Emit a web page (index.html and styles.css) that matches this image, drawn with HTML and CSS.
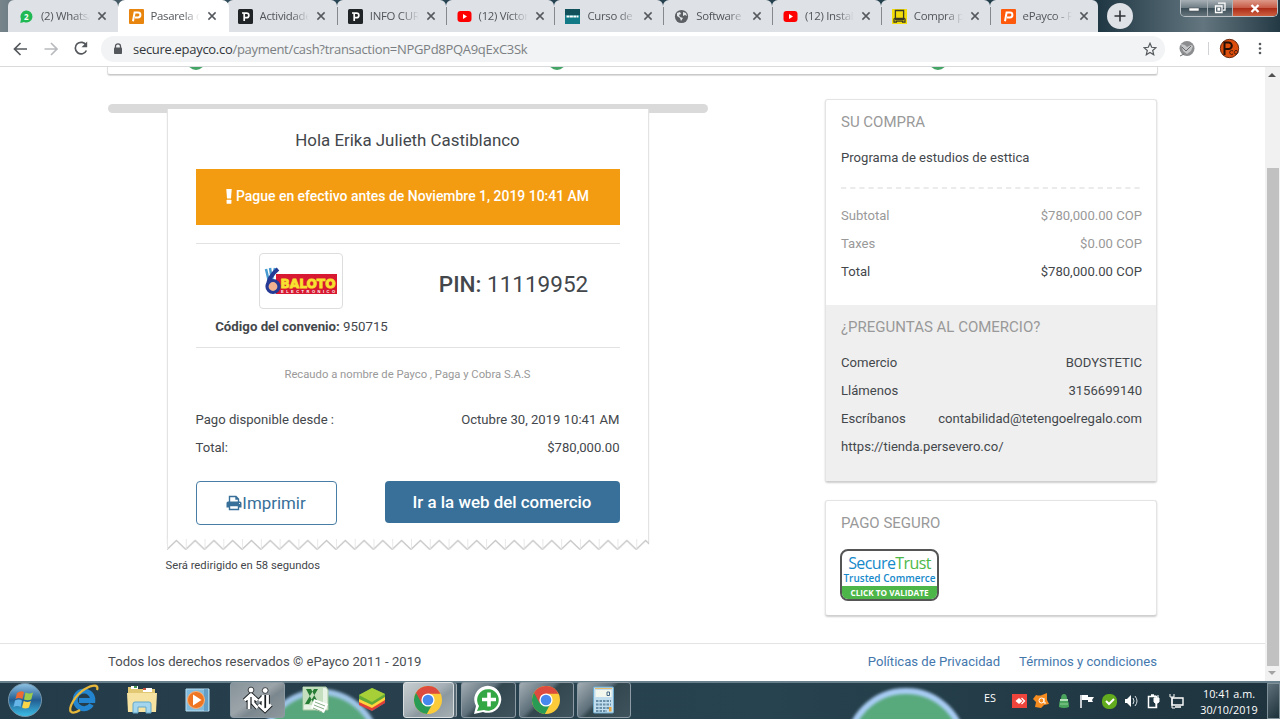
FILE: index.html
```html
<!DOCTYPE html>
<html lang="es">
<head>
<meta charset="utf-8">
<title>Pasarela de pagos</title>
<link rel="stylesheet" href="styles.css">
</head>
<body>
<svg width="0" height="0" class="defs">
  <defs>
    <symbol id="close" viewBox="0 0 10 10"><path d="M1.4 1.4 8.6 8.6M8.6 1.4 1.4 8.6" stroke="#55595d" stroke-width="1.5"/></symbol>
    <symbol id="youtube" viewBox="0 0 15 15"><rect x=".5" y="2" width="14" height="11" rx="3" fill="#f00"/><path d="M6 5v5l4-2.5z" fill="#fff"/></symbol>
    <symbol id="payco" viewBox="0 0 15 15"><rect width="15" height="15" rx="1" fill="currentColor"/><path d="M4 12.3 5.6 3.6H9a2.2 2.2 0 0 1 0 4.8H6" fill="none" stroke="#fff" stroke-width="2"/></symbol>
    <symbol id="dark-p" viewBox="0 0 15 15"><rect width="15" height="15" rx="1.5" fill="#202427"/><path d="M4 4h2.2v8M6.2 4.2H8.6a2.2 2.2 0 0 1 0 4.5H6" fill="none" stroke="#fff" stroke-width="1.7"/></symbol>
    <symbol id="chrome" viewBox="0 0 30 30">
      <circle cx="15" cy="15" r="14" fill="#fccb3a"/>
      <path d="M15 15 3 7.8A14 14 0 0 0 13.8 29L20 18z" fill="#2a9b55"/>
      <path d="M15 15 8.5 18 3 7.8A14 14 0 0 1 27.5 8.8H15z" fill="#dc4b3e"/>
      <circle cx="15" cy="15" r="6.6" fill="#fff"/><circle cx="15" cy="15" r="5.3" fill="#4688ee"/>
    </symbol>
    <linearGradient id="blue" x2="0" y2="1"><stop stop-color="#8fc3e4"/><stop offset=".5" stop-color="#235d91"/><stop offset="1" stop-color="#3cc0e8"/></linearGradient>
    <filter id="soft" color-interpolation-filters="sRGB" x="-10%" y="-10%" width="120%" height="120%"><feGaussianBlur stdDeviation="1.8"/></filter>
    <pattern id="teeth" width="18.77" height="12" patternUnits="userSpaceOnUse"><path d="M0 10.5 9.4 1.5 18.77 10.5" fill="none" stroke="#c9c9c9" stroke-width="1.4"/><path d="M.5 0v10" stroke="#e8e8e8"/></pattern>
  </defs>
</svg>
<div class="screen">
  <header class="tabstrip">
    <div class="tabs">
      <div class="tab first"><svg class="fav" viewBox="0 0 15 15"><path d="M1.3 14 2 10a6 6 0 1 1 3 3z" fill="#20b954"/><text x="7.4" y="10.7" class="badge">2</text></svg><span class="label">(2) WhatsApp</span><svg class="x"><use href="#close"/></svg></div>
      <div class="tab active"><svg class="fav amber"><use href="#payco"/></svg><span class="label">Pasarela de pagos</span><svg class="x"><use href="#close"/></svg></div>
      <div class="tab third"><svg class="fav"><use href="#dark-p"/></svg><span class="label">Actividades</span><svg class="x"><use href="#close"/></svg></div>
      <div class="tab sep"><svg class="fav"><use href="#dark-p"/></svg><span class="label">INFO CURSO</span><svg class="x"><use href="#close"/></svg></div>
      <div class="tab sep"><svg class="fav"><use href="#youtube"/></svg><span class="label">(12) Víctor</span><svg class="x"><use href="#close"/></svg></div>
      <div class="tab sep"><svg class="fav" viewBox="0 0 15 15"><path d="M0 0h15v15H0z" fill="#127a86"/><path d="M0 0h15v6H0z" fill="#10515c"/><path d="M1.5 7.5h12" stroke="#fff" stroke-width="2" stroke-dasharray="3 .4"/></svg><span class="label">Curso de Estética</span><svg class="x"><use href="#close"/></svg></div>
      <div class="tab sep"><svg class="fav" viewBox="0 0 15 15"><circle cx="7.5" cy="7.5" r="6.6" fill="#5c6065"/><path d="M3 4 6 3l1 2-2 1 1 2 3 1-2 3-1-3-3-2zM9 3l3 1 1 3-2-1-2 1z" fill="#e4e7ea"/></svg><span class="label">Software TNS</span><svg class="x"><use href="#close"/></svg></div>
      <div class="tab sep"><svg class="fav"><use href="#youtube"/></svg><span class="label">(12) Instalar</span><svg class="x"><use href="#close"/></svg></div>
      <div class="tab sep"><svg class="fav" viewBox="0 0 15 15"><path d="M0 0h15v15H0z" fill="#f2dd0a"/><path d="M3.400 1.500h8.200v8H3.400zM3.400 9 2 10v3.200h2.400v-1h6.200v1H13V10l-1.400-1" fill="none" stroke="#3b3a24" stroke-width="1.300"/><path d="M3 10.500h9" stroke="#3b3a24" stroke-width="1.500"/></svg><span class="label">Compra por</span><svg class="x"><use href="#close"/></svg></div>
      <div class="tab sep last"><svg class="fav orange"><use href="#payco"/></svg><span class="label">ePayco - Pagos</span><svg class="x"><use href="#close"/></svg></div>
    </div>
    <button class="newtab"><svg width="12" height="12"><path d="M6 .5v11M.5 6h11" stroke="#2f3337" stroke-width="1.6"/></svg></button>
    <div class="winbtns">
      <span class="wb min"><svg width="12" height="8"><rect x="1" y="4" width="10" height="3" fill="#fff" stroke="#4a5159" stroke-width=".6"/></svg></span>
      <span class="wb max"><svg width="12" height="12"><path d="M4 1.2h7v7H9M1.5 4h6.5v6.5H1.5zM4 6.5h1.6v1.5H4z" fill="none" stroke="#fff" stroke-width="1.3"/></svg></span>
      <span class="wb shut"><svg width="10" height="9"><path d="m1.500 1 7 7M8.500 1l-7 7" stroke="#fff" stroke-width="2.400"/></svg></span>
    </div>
  </header>
  <nav class="toolbar">
    <svg class="navicons" width="92" height="33" fill="none" stroke-width="1.7"><path d="M27 17H15M20.5 11 14.5 17l6 6" stroke="#54585c"/><path d="M44.500 17h12M51 11l6 6-6 6" stroke="#b8babd"/><path d="M86.200 13.300A5.800 5.800 0 1 0 86.400 18.500" stroke="#54585c"/><path d="M87.200 9.500v5.700h-5.700z" fill="#54585c"/></svg>
    <div class="omnibox">
      <svg width="10" height="12"><path d="M2.500 5V3.300a2.500 2.500 0 0 1 5 0V5" fill="none" stroke="#54585c" stroke-width="1.300"/><rect x="1" y="4.500" width="8" height="6.500" rx=".8" fill="#54585c"/></svg>
      <span class="url"><b>secure.epayco.co</b>/payment/cash?transaction=NPGPd8PQA9qExC3Sk</span>
      <svg class="star" width="14" height="14"><path d="m7 1.300 1.700 4 4.200.4-3.200 2.800 1 4.200L7 10.500l-3.700 2.200 1-4.200L1.100 5.700l4.200-.4z" fill="none" stroke="#54585c" stroke-width="1.200"/></svg>
    </div>
    <svg width="108" height="33" viewBox="7 0 108 33"><circle cx="29" cy="16.500" r="7.500" fill="#8b8d8f"/><path d="m23 12 4 1 2 2 4-2 2 1-2 5-4 3-4-3z" fill="#c4c6c7"/><path d="m24 15 4 4 5-5M22 24l4-2" stroke="#686a6c" fill="none"/><path d="M50.500 10v13" stroke="#d0d2d4"/><circle cx="71.500" cy="16.500" r="9.200" fill="#dd4d0b" stroke="#6b2c12"/><path d="M66.500 23V10.500h4a3.300 3.300 0 0 1 0 6.600h-3" fill="none" stroke="#241006" stroke-width="2"/><path d="M75 19a2 2 0 1 0 0 3M78 18.500a1.800 1.800 0 1 0 .1 0" fill="none" stroke="#42190b"/><g fill="#55595d"><circle cx="102" cy="12" r="1.300"/><circle cx="102" cy="16.500" r="1.300"/><circle cx="102" cy="21" r="1.300"/></g></svg>
  </nav>
  <div class="viewport">
    <div class="page">
      <div class="steps"><i></i><i></i><i></i></div>
      <main class="columns">
        <section class="left">
          <div class="slot"></div>
          <article class="receipt">
            <h1>Hola Erika Julieth Castiblanco</h1>
            <div class="notice"><svg width="6" height="15"><path d="M.3 0h5.400L5 9.500H1z" fill="#fff"/><rect x=".6" y="10.800" width="4.800" height="4" rx=".5" fill="#fff"/></svg><span>Pague en efectivo antes de Noviembre 1, 2019 10:41 AM</span></div>
            <div class="pinrow">
              <div class="brand">
                <div class="thumb"><svg width="74" height="30" viewBox="0 0 74 30"><path d="M12 8h61v20H12z" fill="#d71931"/><path d="m2 3 3 13M6 2l2 12M11 2 8 13" stroke="#489bd1" stroke-width="2.500"/><path d="M14 3c-6 5-10 10-10 17" stroke="#253a95" stroke-width="4" fill="none"/><circle cx="9" cy="20.500" r="6" fill="#f1b38f" stroke="#253a95" stroke-width="3.200"/><text x="16.500" y="21.500" textLength="55" lengthAdjust="spacingAndGlyphs" class="baloto">BALOTO</text><text x="17" y="27.300" textLength="54" class="electronico">ELECTRONICO</text></svg></div>
                <div class="code"><b>Código del convenio:</b> 950715</div>
              </div>
              <div class="pin"><b>PIN:</b> 11119952</div>
            </div>
            <p class="collector">Recaudo a nombre de Payco , Paga y Cobra S.A.S</p>
            <div class="row"><span>Pago disponible desde :</span><span>Octubre 30, 2019 10:41 AM</span></div>
            <div class="row"><span>Total:</span><span>$780,000.00</span></div>
            <div class="actions">
              <a class="btn outline"><svg width="16" height="16" viewBox="0 0 16 16"><path d="M3.500 7V1.500h6.500L12.500 4v3M10 1.500V4h2.500" fill="none" stroke="#38709a" stroke-width="1.400"/><path d="M2 6.500h12q1.500 0 1.500 1.500v4.500h-3V10h-9v2.500h-3V8q0-1.500 1.500-1.500z" fill="#38709a"/><path d="M3.500 10.500h9v4h-9z" fill="#fff" stroke="#38709a" stroke-width="1.400"/><circle cx="13.500" cy="8.500" r=".6" fill="#fff"/></svg><span>Imprimir</span></a>
              <a class="btn solid">Ir a la web del comercio</a>
            </div>
          </article>
          <svg class="teeth" width="482" height="12"><rect width="482" height="12" fill="url(#teeth)"/></svg>
          <p class="redirect">Será redirigido en 58 segundos</p>
        </section>
        <aside class="right">
          <div class="card purchase">
            <h2>SU COMPRA</h2>
            <p class="product">Programa de estudios de esttica</p>
            <svg class="dashes" width="301" height="2"><path d="M0 1h301" stroke="#e5e5e5" stroke-width="1.400" stroke-dasharray="5.200 3.970"/></svg>
            <div class="row muted"><span>Subtotal</span><span>$780,000.00 COP</span></div>
            <div class="row muted"><span>Taxes</span><span>$0.00 COP</span></div>
            <div class="row"><span>Total</span><span>$780,000.00 COP</span></div>
            <div class="questions">
              <h2>¿PREGUNTAS AL COMERCIO?</h2>
              <div class="row"><span>Comercio</span><span>BODYSTETIC</span></div>
              <div class="row"><span>Llámenos</span><span>3156699140</span></div>
              <div class="row"><span>Escríbanos</span><span>contabilidad@tetengoelregalo.com</span></div>
              <div class="row"><span>https://tienda.persevero.co/</span></div>
            </div>
          </div>
          <div class="card safe">
            <h2>PAGO SEGURO</h2>
            <div class="seal"><div class="st"><span>Secure</span><em>Trust</em></div><div class="tc">Trusted Commerce</div><div class="cv">CLICK TO VALIDATE</div></div>
          </div>
        </aside>
      </main>
      <footer class="foot"><span>Todos los derechos reservados © ePayco 2011 - 2019</span><span class="links"><a>Políticas de Privacidad</a><a>Términos y condiciones</a></span></footer>
    </div>
    <div class="scroll"><svg width="9" height="6"><path d="M0 5 4 1l4 4z" fill="#505050"/></svg><div class="thumbbar"></div><svg width="9" height="6"><path d="m0 1 4 4 4-4z" fill="#a3a3a3"/></svg></div>
  </div>
  <footer class="taskbar">
    <svg class="wall" width="1280" height="38"><g filter="url(#soft)"><circle cx="320" cy="69" r="58" fill="#58a77c" stroke="#9fc5e8" stroke-width="6"/><circle cx="906" cy="68" r="58" fill="#58a97c" stroke="#a9cdf5" stroke-width="6"/></g><path d="M0 1h1280" stroke="#687f8c" stroke-width="2"/></svg>
    <div class="apps">
      <span class="app start"><svg width="38" height="38"><circle cx="19" cy="19" r="16.500" fill="url(#blue)" stroke="#7394a8"/><path d="M11 12q4-3 7-1l-1.500 7q-4-2-7 0z" fill="#ed6a35"/><path d="M19.500 11.500q4 2 7.500 0l-1.700 7q-4 1.600-7.300 0z" fill="#9dcc4c"/><path d="M9 19.500q4-2 7 0L14.500 26q-3-2-7 0z" fill="#65b5e8"/><path d="M17.700 20q4 2 7.200 0L23 26.500q-4 2-7 0z" fill="#fbd448"/></svg></span>
      <span class="app"><svg width="34" height="34"><path d="M24.500 21.500a8.800 8.800 0 1 1 1.300-4H12" fill="none" stroke="#2385cf" stroke-width="5"/><path d="M4 29C1 25 8 12 18 6c9-5 14-4 12 1M4 29c2 1 6 0 9-2" fill="none" stroke="#e7b83c" stroke-width="2.300"/></svg></span>
      <span class="app"><svg width="34" height="34"><path d="M3 7V4h8l2 2h17v22H3z" fill="#e3c873"/><path d="M6 3h7v3H6zm12 2h9v4h-9z" fill="#fff"/><path d="M9 3h3v2H9z" fill="#489b54"/><path d="M18 5h3v2h-3z" fill="#c55242"/><path d="M2 10h30l-1 19H3z" fill="#f6e3a2"/><path d="M8 30v-9q0-2 2-2h14q2 0 2 2v9h-5v-6h-8v6z" fill="#a3d6ee" stroke="#63a7c9"/></svg></span>
      <span class="app"><svg width="34" height="34"><path d="M4 6h23v22H4z" fill="#82bbdc" stroke="#b8dff3"/><path d="M23 6v22M25 6v22" stroke="#4381af"/><circle cx="14" cy="17" r="8.500" fill="#ee7623" stroke="#f7b27d"/><path d="M11 11.500v11l8.500-5.500z" fill="#fff"/></svg></span>
      <span class="app win pale"><svg width="34" height="34" fill="none"><g stroke="#171b1e" stroke-width="4.600"><path d="M4.500 17.500 11 11.500l6.500 6M9 14v12M13 14v6l4.500 5M18.500 21.500 25 27.500l6-6M23 12v13M27.500 12v12M23 14l-4 4"/></g><g stroke="#fff" stroke-width="2.800"><path d="M4.500 17.500 11 11.500l6.500 6M9 14v12M13 14v6l4.500 5M18.500 21.500 25 27.500l6-6M23 12v13M27.500 12v12M23 14l-4 4"/></g><g fill="#fff" stroke="#171b1e" stroke-width=".8"><circle cx="11" cy="7" r="2.900"/><circle cx="25.200" cy="7.500" r="2.900"/></g></svg></span>
      <span class="app"><svg width="34" height="34"><path d="M5 4h23l2 3v20H5z" fill="#e7f3e4" stroke="#a7c7a1"/><path d="M5 4h20v18H5z" fill="#c4dfbd"/><path d="M8 6h5l8 15h-5zM20 6h-4L7 21h4z" fill="#267c35"/><path d="m16 16 14 5-4 9-13-5z" fill="#fff"/><path d="m17 19 10 4m-11-1 10 4m-11-1 9 4" stroke="#86af86"/></svg></span>
      <span class="app"><svg width="34" height="34"><path d="m4 21 13-8 13 7-13 8z" fill="#3576bd"/><path d="m4 18 13-8 13 6v4l-13 8-13-6z" fill="#df3f36"/><path d="m4 16 13-8 13 6v3l-13 8-13-6z" fill="#ffd33d"/><path d="m4 12 13-7 13 6v3l-13 8-13-6z" fill="#62aa37"/><path d="m4 12 13-7 13 6-13 8z" fill="#a6cf38"/></svg></span>
      <span class="app win bright"><svg width="30" height="30"><use href="#chrome"/></svg></span>
      <span class="app win wa"><svg width="32" height="32"><path d="m2 30 2-8a13.500 13.500 0 1 1 7 6z" fill="#fff"/><path d="m5 27 2-5a10.800 10.800 0 1 1 5 4z" fill="#32a744"/><path d="M17 8.500v14M10 15.500h14" stroke="#fff" stroke-width="3.600"/></svg></span>
      <span class="app win c2"><svg width="30" height="30"><use href="#chrome"/></svg></span>
      <span class="app win calc"><svg width="24" height="30"><rect x="1.500" y="2" width="20" height="26" rx="1" fill="#c1ddee" stroke="#6eabcc"/><path d="M3.500 5h16v7h-16z" fill="#f4f7ed"/><path d="M3 3.500h17" stroke="#e8bc6a"/><path d="M4 16h15M4 19.500h15M4 23h15M4 26h11" stroke="#698fa9" stroke-width="2" stroke-dasharray="2.500 1"/><path d="M17 22h2.500v4.500H17z" fill="#e7a43c"/><path d="M15 7h2.500v3.500H15z" fill="none" stroke="#456a87"/></svg></span>
    </div>
    <div class="tray">
      <span class="lang">ES</span>
      <svg class="trayicons" width="176" height="20" fill="none">
        <path d="M0 3h15v14H0z" fill="#ef443b"/><path d="m3.500 10 3.500-3 3.500 3L7 13z" fill="#fff"/><path d="m9.500 7 3 3-3 3" stroke="#fff" stroke-width="1.300"/>
        <path d="M24 4q4 1 6 0l5-2v7l2 4-5 1-3 3-6-1 1-5-3-3z" fill="#f68b20"/><circle cx="29.500" cy="9.500" r="2.500" stroke="#fff"/><path d="M32 7v5h2" stroke="#fff"/>
        <path d="M47 16q0-6 2-8 0-5 3-5t3 5q2 3 2 8-5 2-10 0z" fill="#4aa45c"/><path d="M48 9h8" stroke="#b5dfb8" stroke-width="2"/><path d="M48 13h8" stroke="#91cf9b"/>
        <path d="M69 4v13" stroke="#fff" stroke-width="1.500"/><path d="M70 4h6v2h6l-2 3 1 2h-5V9h-6z" fill="#fff"/>
        <rect x="90" y="3" width="15" height="15" rx="6.500" fill="#62aa1e"/><path d="m94 10 3 3 5-5" stroke="#fff" stroke-width="2"/>
        <path d="M113 8h2l4-4v12l-4-4h-2z" fill="#fff"/><path d="M121 7q2 3 0 6m2-8q4 5 0 10" stroke="#d9e0e4"/>
        <path d="M136.500 5.500h8v11h-8zM139 4h3" stroke="#fff" stroke-width="1.500"/><path d="M142 7h5v4q-3 3-5 0zM143 4v3m3-3v3m-2 5v4" fill="#fff" stroke="#fff"/>
        <path d="M160 7h11v7h-11zM163 16h6" stroke="#fff" stroke-width="1.400"/><path d="M158 3v3h4V3m-2 3v11h3" stroke="#fff"/>
      </svg>
      <div class="clock"><span>10:41 a.m.</span><span>30/10/2019</span></div>
      <div class="peek"></div>
    </div>
  </footer>
</div>
</body>
</html>
```
FILE: styles.css
```css
* { box-sizing: border-box; }
body { margin: 0; font: 13.1px/28px Roboto, sans-serif; color: #43474b; }
h1, h2, p { margin: 0; font-weight: 400; }
.defs { position: absolute; }
svg { flex: none; display: block; }
.screen { width: 1280px; height: 719px; overflow: hidden; display: flex; flex-direction: column; background: #fff; }

.tabstrip { height: 32px; flex: none; display: flex; background: linear-gradient(90deg, #77858b 0, #52656e 3%, #294554 20%, #233e4b 80%, #213945 86%, #637680 94%, #233943 100%); padding-left: 8px; }
.tabs { display: flex; width: 1091px; }
.tab { width: 108.8px; flex: none; display: flex; align-items: center; padding: 0 0 0 11px; background: #dee1e6; border-radius: 6px 6px 0 0; font: 11.4px/16px "Open Sans", sans-serif; color: #52565b; position: relative; }
.tab.first { width: 109.5px; }
.tab.third { width: 110.3px; }
.tab.last { width: 108px; }
.tab.active { background: #fff; width: 111.5px; padding-right: 2px; border-radius: 7px 7px 0 0; margin-right: -2.5px; z-index: 1; }
.sep::before { content: ""; position: absolute; left: 0; top: 7px; height: 18px; width: 1px; background: #85898e; }
.fav { width: 15px; height: 15px; }
.amber { color: #e8850f; }
.orange { color: #ff5a0b; }
.badge { font: bold 8px "Open Sans", sans-serif; fill: #fff; text-anchor: middle; }
.label { width: 49px; margin: 0 7px 0 7px; white-space: nowrap; overflow: hidden; letter-spacing: -.3px; -webkit-mask-image: linear-gradient(90deg, #000 65%, transparent 100%); mask-image: linear-gradient(90deg, #000 65%, transparent 100%); }
.x { width: 10px; height: 10px; }
.newtab { width: 26px; height: 26px; margin: 3px 0 0 8px; padding: 0; border: 0; border-radius: 50%; background: #dee1e6; display: flex; align-items: center; justify-content: center; }
.winbtns { display: flex; height: 17px; margin-left: 47px; border: 1px solid #bac2c7; border-top: 0; border-radius: 0 0 5px 5px; overflow: hidden; width: 98px; }
.wb { display: flex; align-items: center; justify-content: center; background: linear-gradient(#a7b0b5, #707e85 48%, #3b4d57 52%, #66747b); border-right: 1px solid #abb3b8; }
.min { width: 27px; } .max { width: 25px; }
.shut { width: 44px; border: 0; background: linear-gradient(#dd9988, #c85c48 48%, #ac2c18 52%, #cd6040); }

.toolbar { height: 34.5px; flex: none; display: flex; background: #fff; border-bottom: 1.5px solid #d9dadc; }
.omnibox { height: 26px; width: 1064px; margin: 4px 0 0 9px; background: #f1f3f4; border-radius: 13px; display: flex; align-items: center; padding: 0 8px 0 12px; }
.url { margin-left: 10px; font: 13px/20px "Open Sans", sans-serif; letter-spacing: -.3px; color: #7b7f83; white-space: nowrap; }
.url b { font-weight: 400; color: #33373b; }
.star { margin-left: auto; }

.viewport { height: 614.5px; flex: none; display: flex; overflow: hidden; }
.page { width: 1265px; display: flex; flex-direction: column; }
.steps { height: 8.5px; flex: none; margin: 0 107px; border: 1px solid #dedede; border-top: 0; border-bottom-color: #c9c9c9; border-radius: 0 0 3px 3px; box-shadow: 0 1px 1px #ddd; display: flex; padding-left: 79px; overflow: hidden; }
.steps i { width: 18px; height: 18px; margin-top: -15px; border-radius: 50%; background: #43a466; flex: none; }
.steps i + i { margin-left: 343px; } .steps i + i + i { margin-left: 363px; }
.columns { display: flex; justify-content: space-between; margin: 24px 108px 0; height: 544px; width: 1049px; }
.left { width: 600px; padding-top: 5px; margin-left: -.5px; }
.slot { height: 9px; border-radius: 5px; background: #dadada; }
.receipt { width: 482px; height: 435px; margin: -4px 0 0 59px; background: #fff; border: 1px solid #e3e3e3; border-width: 0 1px; padding: 18px 28px 0; position: relative; box-shadow: 0 0 1px #ddd; clip-path: inset(0 -2px 0 -2px); }
h1 { font-size: 16.9px; line-height: 26px; text-align: center; }
.notice { height: 56px; margin-top: 15.5px; background: #f39c12; color: #fff; display: flex; align-items: center; justify-content: center; gap: 4px; font-size: 13.95px; line-height: 27px; font-weight: 500; white-space: nowrap; }
.pinrow { height: 105px; margin-top: 18.5px; border: 1px solid #e2e2e2; border-width: 1px 0; display: flex; }
.brand { width: 212px; }
.thumb { width: 84px; height: 56px; margin: 9px 0 0 63px; border: 1px solid #ddd; border-radius: 4px; display: flex; align-items: center; justify-content: center; }
.baloto { font: bold 12.5px "DejaVu Sans", sans-serif; fill: #f7e22f; stroke: #f7e22f; stroke-width: .9; }
.electronico { font: bold 4px "Liberation Sans", sans-serif; fill: #fff; }
.code { text-align: center; line-height: 20px; margin-top: 8px; font-size: 13.25px; }
.code b { font-weight: 700; }
.pin { flex: 1; padding-top: 26px; text-align: center; font-size: 22.5px; line-height: 28px; }
.pin b { font-weight: 500; }
.collector { margin: 18px 0 22px; font-size: 11.25px; line-height: 18px; color: #999; text-align: center; }
.row { display: flex; justify-content: space-between; height: 28px; white-space: nowrap; }
.actions { display: flex; justify-content: space-between; margin-top: 19px; }
.btn { height: 42px; border-radius: 4px; display: flex; align-items: center; justify-content: center; font-size: 16.9px; }
.outline { width: 141px; height: 44px; border: 1px solid #487da5; color: #38709a; }
.solid { width: 235px; background: #38709a; color: #fff; font-weight: 500; }
.teeth { margin: -5px 0 0 59px; position: relative; }
.redirect { margin: 6px 0 0 58px; font-size: 11.25px; line-height: 18px; }

.right { width: 332px; }
.card { border: 1px solid #e4e4e4; border-bottom-color: #d0d0d0; border-radius: 3px; box-shadow: 0 1px 2px #ccc; padding: 8px 14px 0 15px; background: #fff; }
.purchase { height: 383px; }
h2 { font-size: 15px; line-height: 28px; color: #999; }
.product { margin-top: 8px; }
.dashes { margin: 15px 0 13px; }
.muted { color: #999; }
.questions { background: #efefef; margin: 19px -14px 0 -15px; padding: 8px 14px 0 15px; height: 176px; }
.questions h2 { margin-bottom: 8px; }
.safe { height: 116px; margin-top: 18px; }
.seal { width: 99px; height: 52px; margin: 12px 0 0 -1px; border: 2px solid #555; border-radius: 8px; overflow: hidden; font-family: "Open Sans", sans-serif; white-space: nowrap; text-align: center; display: flex; flex-direction: column; }
.st { display: flex; justify-content: center; height: 21px; line-height: 24px; font-size: 16px; font-weight: 500; letter-spacing: -.6px; color: #1689ca; }
.st em { font-style: normal; color: #4db848; }
.tc { font: 600 10px/12px "Open Sans", sans-serif; height: 14px; color: #1689ca; }
.cv { flex: 1; background: #4cb648; color: #fff; font: bold 8.2px/13px "Open Sans", sans-serif; }

.foot { height: 38px; flex: none; border-top: 1px solid #e3e3e3; margin-top: auto; padding: 4px 108px 0; display: flex; justify-content: space-between; color: #4a4e52; }
.links { display: flex; gap: 19px; color: #4478ad; }
.scroll { width: 15px; background: #f1f1f1; display: flex; flex-direction: column; align-items: center; padding: 5px 0; }
.thumbbar { width: 12px; height: 498px; margin: 90px 0 0 1px; background: #c1c1c1; flex: none; }
.scroll svg:last-child { margin-top: 4px; }

.taskbar { height: 38px; flex: none; position: relative; border-top: 2px solid #687f8c; background: linear-gradient(90deg, #243c49, #28404e 30%, #27434f 60%, #1e333e); display: flex; justify-content: space-between; }
.wall { position: absolute; left: 0; top: -2px; }
.apps, .tray { display: flex; position: relative; }
.app { width: 57.7px; height: 38px; margin-top: -2px; display: flex; align-items: center; justify-content: center; flex: none; }
.start { width: 55px; padding-right: 5px; }
.win { width: 54.5px; height: 36px; margin: -1px 1.2px 0 2px; border: 1px solid #8d9ca4; border-radius: 3px; background: linear-gradient(135deg, #a3adb3 0, #5e707b 40%, #33474f 48%, #3f535e); }
.pale { background: linear-gradient(145deg, #87939a, #9ba4a9 45%, #7b878e 60%, #8e989d); margin-left: 2px; }
.bright { width: 51px; margin: -1px 0 0 1.5px; background: linear-gradient(145deg, #c7cdd0, #a5afb5 45%, #8b989f 60%, #a6b0b4); border-color: #d8dddf; box-shadow: 3px 0 0 -1px #596b75, 4px 0 0 -1px #a0acb2; }
.wa { margin-left: 7.5px; }
.c2, .calc { margin-left: 2.2px; }
.tray { color: #fff; font: 11.5px/15px "Open Sans", sans-serif; }
.lang { font-size: 10.8px; margin: 7px 15px 0 0; width: 13px; }
.trayicons { margin: 8px 5px 0 0; }
.clock { width: 58px; display: flex; flex-direction: column; text-align: center; font-size: 10.8px; line-height: 16px; margin: 2.5px 9px 0 7px; white-space: nowrap; }
.peek { width: 13px; height: 36px; border: 1px solid #81919a; background: linear-gradient(135deg, #60717b, #1c313b); }
```
